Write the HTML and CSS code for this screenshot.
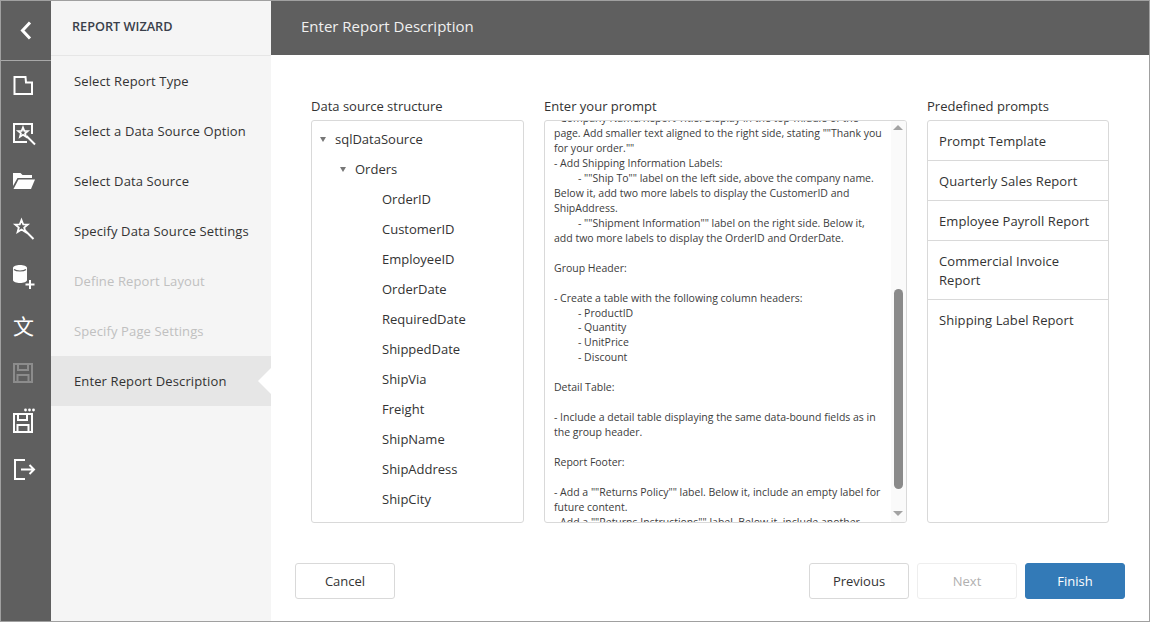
FILE: index.html
```html
<!DOCTYPE html>
<html lang="en">
<head>
<meta charset="utf-8">
<title>Report Wizard</title>
<link rel="stylesheet" href="styles.css">
</head>
<body>
<div class="app">
  <nav class="rail">
    <div class="rail-back">
      <svg class="ico" viewBox="0 0 28 28"><path class="st3" d="M18 5.500 10.500 13.500l7.500 8"/></svg>
    </div>
    <div class="rail-item"><svg class="ico" viewBox="0 0 28 28"><path class="st" d="M2.500 6H13.500l.5 5.500H20V23H2.500z"/></svg></div>
    <div class="rail-item"><svg class="ico" viewBox="0 0 28 28"><path class="st" d="M20 15V5H2v18h13"/><path class="st1" d="M11 8.500l1.300 3.300 3.500.200-2.700 2.300.9 3.400-3-1.900-3 1.900.9-3.400L6.200 12l3.500-.2z"/><path class="st" d="M14.500 17l8.500 8.500"/></svg></div>
    <div class="rail-item"><svg class="ico" viewBox="0 0 28 28"><path class="fl" d="M1 6h7.500l2 2H20v3H5.500L1 19z"/><path class="fl" d="M6.500 12.500H23L19 22H1.500z"/></svg></div>
    <div class="rail-item"><svg class="ico" viewBox="0 0 28 28"><path class="st1" d="M9.500 5l1.700 4.300 4.600.300-3.600 3 1.200 4.500-3.900-2.500-3.900 2.500 1.200-4.500-3.600-3 4.600-.3z"/><path class="st" d="M13 15.500l8.500 8.500"/></svg></div>
    <div class="rail-item"><svg class="ico" viewBox="0 0 28 28"><path class="fl" d="M1 5c0-4 14-4 14 0v12c0 4-14 4-14 0z"/><path class="dk" d="M2 6.500c2.500 2 9.500 2 12 0"/><path class="st" d="M18 17v9M13.500 21.500h9"/></svg></div>
    <div class="rail-item"><span class="glyph">文</span></div>
    <div class="rail-item is-off"><svg class="ico" viewBox="0 0 28 28"><path class="st" d="M2 5h18v18H2z"/><path class="st" d="M6 5v6h10V5M5.500 23v-7h11v7"/></svg></div>
    <div class="rail-item"><svg class="ico" viewBox="0 0 28 28"><path class="st" d="M2 7h18v18H2z"/><path class="st" d="M6 7v6h9V7M5.500 25v-7h11v7"/><circle class="fl" cx="13.500" cy="3" r="1.400"/><circle class="fl" cx="17.500" cy="3" r="1.400"/><circle class="fl" cx="21.500" cy="3" r="1.400"/></svg></div>
    <div class="rail-item"><svg class="ico" viewBox="0 0 28 28"><path class="st" d="M13 5H3v19h10"/><path class="st" d="M9 14.500h13M17.500 10l4.500 4.500-4.500 4.500"/></svg></div>
  </nav>

  <aside class="steps">
    <div class="steps-head">REPORT WIZARD</div>
    <div class="step">Select Report Type</div>
    <div class="step">Select a Data Source Option</div>
    <div class="step">Select Data Source</div>
    <div class="step">Specify Data Source Settings</div>
    <div class="step is-off">Define Report Layout</div>
    <div class="step is-off">Specify Page Settings</div>
    <div class="step is-active">Enter Report Description</div>
  </aside>

  <main class="main">
    <header class="top">Enter Report Description</header>
    <div class="cols">
      <section class="col col-tree">
        <div class="label">Data source structure</div>
        <div class="box tree">
          <div class="node lv0"><i class="tw"></i>sqlDataSource</div>
          <div class="node lv1"><i class="tw"></i>Orders</div>
          <div class="node leaf">OrderID</div>
          <div class="node leaf">CustomerID</div>
          <div class="node leaf">EmployeeID</div>
          <div class="node leaf">OrderDate</div>
          <div class="node leaf">RequiredDate</div>
          <div class="node leaf">ShippedDate</div>
          <div class="node leaf">ShipVia</div>
          <div class="node leaf">Freight</div>
          <div class="node leaf">ShipName</div>
          <div class="node leaf">ShipAddress</div>
          <div class="node leaf">ShipCity</div>
        </div>
      </section>
      <section class="col col-prompt">
        <div class="label">Enter your prompt</div>
        <div class="box prompt">
          <div class="prompt-view"><pre class="prompt-text">- Company Name/Report Title: Display in the top-middle of the
page. Add smaller text aligned to the right side, stating ""Thank you
for your order.""
- Add Shipping Information Labels:
	- ""Ship To"" label on the left side, above the company name.
Below it, add two more labels to display the CustomerID and
ShipAddress.
	- ""Shipment Information"" label on the right side. Below it,
add two more labels to display the OrderID and OrderDate.

Group Header:

- Create a table with the following column headers:
	- ProductID
	- Quantity
	- UnitPrice
	- Discount

Detail Table:

- Include a detail table displaying the same data-bound fields as in
the group header.

Report Footer:

- Add a ""Returns Policy"" label. Below it, include an empty label for
future content.
- Add a ""Returns Instructions"" label. Below it, include another</pre></div>
          <div class="sbar">
            <i class="arrow up"></i>
            <i class="thumb"></i>
            <i class="arrow down"></i>
          </div>
        </div>
      </section>
      <section class="col col-pre">
        <div class="label">Predefined prompts</div>
        <div class="box pre">
          <div class="pre-item">Prompt Template</div>
          <div class="pre-item">Quarterly Sales Report</div>
          <div class="pre-item">Employee Payroll Report</div>
          <div class="pre-item">Commercial Invoice Report</div>
          <div class="pre-item">Shipping Label Report</div>
        </div>
      </section>
    </div>
    <footer class="foot">
      <button class="btn">Cancel</button>
      <div class="foot-right">
        <button class="btn">Previous</button>
        <button class="btn is-off">Next</button>
        <button class="btn is-primary">Finish</button>
      </div>
    </footer>
  </main>
</div>
</body>
</html>
```
FILE: styles.css
```css
* { box-sizing: border-box; }
html, body { margin: 0; padding: 0; }
body { width: 1150px; height: 622px; overflow: hidden; background: #fff; font-family: "Open Sans", "Noto Sans", sans-serif; color: #333; }
.app { display: flex; width: 1150px; height: 622px; border: 1px solid #a0a0a0; background: #fff; }

.rail { width: 50px; flex: none; background: #5f5f5f; display: flex; flex-direction: column; }
.rail-back { height: 60px; border-bottom: 1px solid #a8a8a8; display: flex; align-items: center; justify-content: center; flex: none; color: #fff; }
.rail-item { height: 48px; flex: none; display: flex; align-items: center; justify-content: center; color: #fff; }
.rail-item.is-off { color: #8c8c8c; }
.ico { width: 28px; height: 28px; display: block; overflow: visible; }
.st, .st1, .st3 { fill: none; stroke: currentColor; }
.st { stroke-width: 2; }
.st1 { stroke-width: 1.800; }
.st3 { stroke-width: 3; }
.fl { fill: currentColor; }
.dk { fill: none; stroke: #5f5f5f; stroke-width: 1.200; }
.glyph { font-family: "Noto Sans CJK SC", sans-serif; font-size: 21px; line-height: 28px; width: 28px; text-align: center; margin: -1px 0 0 -5px; }

.steps { width: 220px; flex: none; background: #f5f5f5; display: flex; flex-direction: column; }
.steps-head { height: 55px; border-bottom: 1px solid #e6e6e6; padding: 0 21px 4px; display: flex; align-items: center; font-size: 12.700px; font-weight: 600; color: #3a3f4a; flex: none; }
.step { height: 50px; flex: none; padding: 0 0 0 23px; display: flex; align-items: center; font-size: 13px; letter-spacing: 0.120px; white-space: nowrap; color: #333; position: relative; }
.step.is-off { color: #c0c0c0; }
.step.is-active { background: #e6e6e6; }
.step.is-active::after { content: ""; position: absolute; right: 0; top: 12px; border-style: solid; border-width: 13px 13px 13px 0; border-color: transparent #fff transparent transparent; }

.main { flex: 1; min-width: 0; display: flex; flex-direction: column; }
.top { height: 54px; flex: none; background: #5f5f5f; color: #f0f0f0; font-size: 15px; padding: 0 30px 4px; display: flex; align-items: center; }
.cols { display: flex; gap: 20px; padding: 41px 40px 0; height: 468px; flex: none; }
.col { display: flex; flex-direction: column; }
.col-tree { width: 213px; }
.col-prompt { width: 363px; }
.col-pre { width: 182px; }
.label { font-size: 13px; height: 24px; line-height: 20px; flex: none; }
.box { height: 403px; flex: none; border: 1px solid #d9d9d9; border-radius: 3px; overflow: hidden; background: #fff; }

.tree { padding-top: 3px; font-size: 13px; }
.node { height: 30px; display: flex; align-items: center; }
.lv0 { padding-left: 7px; }
.lv1 { padding-left: 27px; }
.leaf { padding-left: 70px; }
.tw { width: 0; height: 0; margin-right: 9px; margin-left: 1px; border-style: solid; border-width: 5px 3.500px 0; border-color: #777 transparent transparent; flex: none; }

.prompt { display: flex; }
.prompt-view { flex: 1; min-width: 0; overflow: hidden; padding-left: 9px; }
.prompt-text { margin: -9.700px 0 0; font-family: inherit; font-size: 10.500px; line-height: 14.930px; tab-size: 24px; white-space: pre; color: #3c3c3c; }
.sbar { width: 15px; flex: none; background: #fafafa; position: relative; }
.sbar .arrow { position: absolute; left: 2px; width: 0; height: 0; border-style: solid; }
.sbar .up { top: 4px; border-width: 0 5px 5px; border-color: transparent transparent #a3a3a3; }
.sbar .down { bottom: 6px; border-width: 5px 5px 0; border-color: #a3a3a3 transparent transparent; }
.sbar .thumb { position: absolute; left: 3px; top: 168px; width: 9px; height: 200px; background: #8a8a8a; border-radius: 4.500px; }

.pre-item { padding: 11px 11px 9px; font-size: 13px; letter-spacing: 0.080px; line-height: 19px; border-bottom: 1px solid #d9d9d9; }
.pre-item:last-child { border-bottom: 0; }

.foot { display: flex; justify-content: space-between; padding: 40px 24px 0; }
.foot-right { display: flex; gap: 8px; }
.btn { width: 100px; height: 36px; border: 1px solid #d9d9d9; border-radius: 3px; background: #fff; font-family: inherit; font-size: 13px; color: #333; padding: 0; }
.btn.is-off { color: #b0b0b0; border-color: #eeeeee; }
.btn.is-primary { background: #337ab7; border-color: #337ab7; color: #fff; }
```
